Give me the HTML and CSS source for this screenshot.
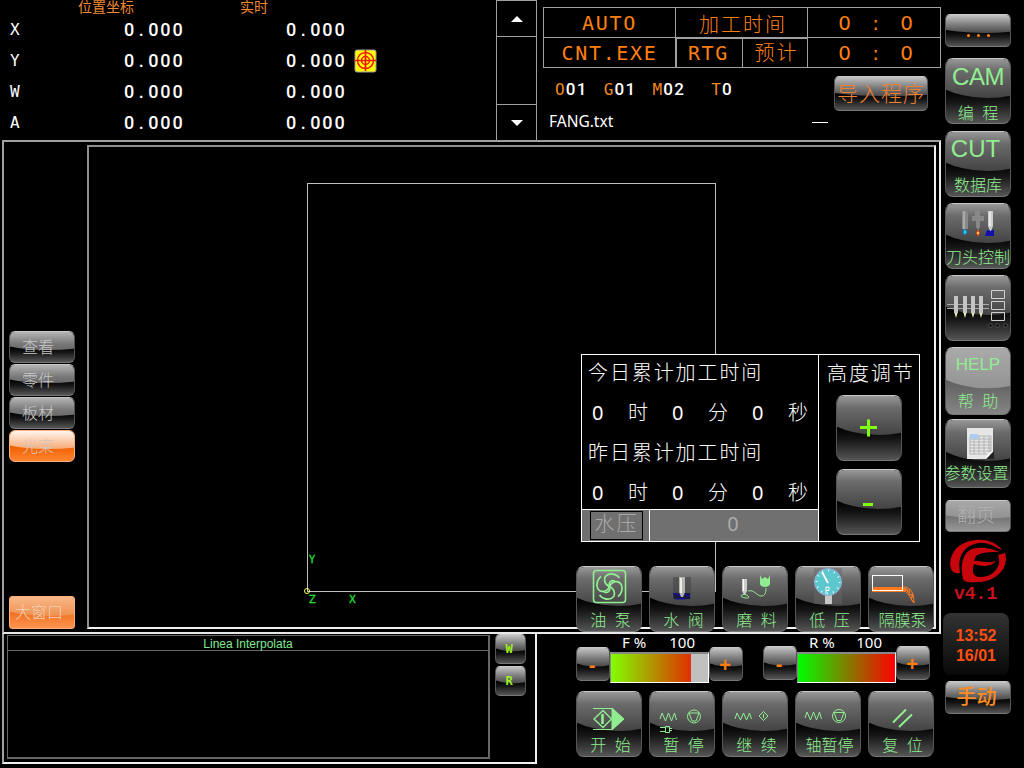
FILE: index.html
```html
<!DOCTYPE html>
<html lang="zh-CN">
<head>
<meta charset="utf-8">
<title>CNT</title>
<link rel="stylesheet" href="styles.css">
</head>
<body>
<div class="app">
  <div class="main">
    <header class="top">
      <section class="coords">
        <div class="row head"><span></span><span class="c1">位置坐标</span><span class="c2">实时</span></div>
        <div class="row"><b>X</b><span class="num">0<i>.</i>000</span><span class="num">0<i>.</i>000</span></div>
        <div class="row"><b>Y</b><span class="num">0<i>.</i>000</span><span class="num">0<i>.</i>000</span>
          <svg class="target" viewBox="0 0 23 24"><rect x="1" y="1" width="21" height="22" rx="2" fill="#ff0" stroke="#999"/><g fill="none" stroke="#f01808" stroke-width="1.5"><circle cx="11.5" cy="11.5" r="8"/><circle cx="11.5" cy="11.5" r="4"/><path d="M11.5 1v21M1 11.5h21" stroke-width="1.7"/></g></svg></div>
        <div class="row"><b>W</b><span class="num">0<i>.</i>000</span><span class="num">0<i>.</i>000</span></div>
        <div class="row"><b>A</b><span class="num">0<i>.</i>000</span><span class="num">0<i>.</i>000</span></div>
      </section>
      <div class="scroll">
        <div class="arrow"><svg viewBox="0 0 12 6"><path d="M0 6L6 0L12 6z"/></svg></div>
        <div class="track"></div>
        <div class="arrow"><svg viewBox="0 0 12 6"><path d="M0 0L6 6L12 0z"/></svg></div>
      </div>
      <section class="status">
        <div class="table">
          <div class="cell mono">AUTO</div><div class="cell cjk">加工时间</div><div class="cell clock"><span>0</span><span>:</span><span>0</span></div>
          <div class="cell mono">CNT.EXE</div><div class="cell pair"><span class="mono">RTG</span><span class="cjk">预计</span></div><div class="cell clock"><span>0</span><span>:</span><span>0</span></div>
        </div>
        <div class="program">
          <div class="codes"><span>O<em>01</em></span><span>G<em>01</em></span><span>M<em>02</em></span><span class="tool">T<em>0</em></span></div>
          <button class="btn small import">导入程序</button>
        </div>
        <div class="file"><span>FANG.txt</span><span class="dash"></span></div>
      </section>
    </header>

    <section class="work">
      <nav class="tabs">
        <button class="btn tab">查看</button>
        <button class="btn tab">零件</button>
        <button class="btn tab">板材</button>
        <button class="btn tab active">光束</button>
        <button class="btn window">大窗口</button>
      </nav>
      <div class="canvas">
        <svg class="plot" viewBox="0 0 845 480">
          <rect x="218.500" y="36.500" width="408" height="408" fill="none" stroke="#c0c0c0"/>
          <g fill="none" stroke="#ff5"><circle cx="218" cy="444" r="2.500"/></g>
          <g class="axis"><text x="220" y="416">Y</text><text x="220" y="456">Z</text><text x="260" y="456">X</text></g>
        </svg>
      </div>

      <aside class="times">
        <div class="totals">
          <h2>今日累计加工时间</h2>
          <p><b>0</b><span>时</span><b>0</b><span>分</span><b>0</b><span>秒</span></p>
          <h2>昨日累计加工时间</h2>
          <p><b>0</b><span>时</span><b>0</b><span>分</span><b>0</b><span>秒</span></p>
          <div class="pressure"><div><span>水压</span></div><b>0</b></div>
        </div>
        <div class="height">
          <h2>高度调节</h2>
          <button class="btn"><svg viewBox="0 0 66 66"><path d="M24 32.500h17M32.500 24.500v17" stroke="#80ff10" stroke-width="3"/></svg></button>
          <button class="btn"><svg viewBox="0 0 66 66"><path d="M27 35.500h10" stroke="#80ff10" stroke-width="3"/></svg></button>
        </div>
      </aside>

      <div class="actions devices">
        <button class="btn"><svg viewBox="0 0 66 66" class="line"><rect x="17.500" y="4.500" width="32" height="32" rx="3" stroke-width="1.600"/><g stroke-width="1.700"><path id="arm" d="M33.500 20.500C28 18 26.500 11 32 8.500C36 7 41 8.500 43.500 12M33.500 20.500C32.500 16 35 13.500 39 15"/><use href="#arm" transform="rotate(180 33.500 20.500)"/><path id="side-arm" d="M33.500 20.500C36 15 43 13.500 45.500 19C47 23 45.500 28 42 30.500"/><use href="#side-arm" transform="rotate(180 33.500 20.500)"/></g></svg><label>油 泵</label></button>
        <button class="btn"><svg viewBox="0 0 66 66"><rect x="24" y="11" width="18" height="23" fill="#444" opacity=".6"/><path d="M24 27h17v6H25z" fill="#181840"/><path d="M24 29l3-2 3 3 4-2 7 2M27 33h9" stroke="#11b" fill="none"/><path d="M30 11h6v15l-2 5h-2l-2-5z" fill="#b5b5ae"/><path d="M32 12v15" stroke="#fff" stroke-width="1.500"/></svg><label>水 阀</label></button>
        <button class="btn"><svg viewBox="0 0 66 66"><path d="M20 13h5v12l-2 4h-1l-2-4z" fill="#ccc"/><path d="M21.500 13v12" stroke="#fff"/><path d="M20 31c-3-2 3-4 6-1s-4 2-6 1zM26 25c6-2 9 5 13 5c4 0 5-3 5-8" stroke="#90ee90" fill="none"/><path d="M38 9l2 4 3-2 3 2 2-4v9c-1 4-9 4-10 0z" fill="#90ee90"/></svg><label>磨 料</label></button>
        <button class="btn"><svg viewBox="0 0 66 66"><rect x="19" y="2" width="28" height="36" fill="#666" opacity=".5"/><path d="M30 28h7v10h-7z" fill="#c8c8c8"/><circle cx="33" cy="16" r="13.500" fill="#5cc7cc" stroke="#9ad" /><circle cx="33" cy="16" r="11.500" fill="none" stroke="#e8ffff" stroke-width="2" stroke-dasharray="1 5"/><path d="M27 6l6 11" stroke="#fff" stroke-width="1.800"/><path d="M31 28v-7h3v3.500h-3" fill="none" stroke="#fff"/></svg><label>低 压</label></button>
        <button class="btn"><svg viewBox="0 0 66 66"><path d="M4 21h31l3 2v3H4z" fill="#ff7820"/><rect x="4.500" y="9.500" width="30" height="15" fill="none" stroke="#fff"/><path d="M35 21c8 0 11 6 11 16M35 24c5 2 6 6 11 13M37 21l3 5 2-3-1 6 4-1-2 5 3 4M40 23c-4 4 7 6 4 9" fill="none" stroke="#ff7820" stroke-width="1"/></svg><label>隔膜泵</label></button>
      </div>
    </section>

    <footer class="bottom">
      <section class="console">
        <div class="log"><div>Linea Interpolata</div></div>
        <div class="modes"><button class="btn small">W</button><button class="btn small">R</button></div>
      </section>
      <section class="controls">
        <div class="feeds">
          <div class="feed"><button class="btn small">-</button><div class="gauge"><p><span>F %</span><span>100</span></p><div class="bar f"></div></div><button class="btn small">+</button></div>
          <div class="feed r"><button class="btn small">-</button><div class="gauge"><p><span>R %</span><span>100</span></p><div class="bar"></div></div><button class="btn small">+</button></div>
        </div>
        <div class="actions">
          <button class="btn"><svg viewBox="0 0 66 66" class="line"><path d="M17 17.500h19M17 38.500h19" /><path d="M36 17l12 11-12 11z" fill="#90ee90"/><path d="M18 28l9-8.500 8.500 8.500-8.500 8.500z" stroke-width="1.400"/><path d="M26.500 23v10" stroke-width="2.600"/></svg><label>开 始</label></button>
          <button class="btn"><svg viewBox="0 0 66 66" class="line"><path d="M11 28l2-6 3.500 8 3-8 3 8 3-8 2 7"/><circle cx="45" cy="25.500" r="6.500"/><path d="M40 22h10l-3 8h-4z"/><path d="M11 36.500h5M11 40.500h5M16.500 35.500h4v6h-4zM21 37.500h2M21 39.500h2" /></svg><label>暂 停</label></button>
          <button class="btn"><svg viewBox="0 0 66 66" class="line"><path d="M13 28l2-6 3.500 7 3-7 3 7 3-7 2 6M37 25l4.500-4.500 4.500 4.500-4.500 4.500zM41.500 23v4"/></svg><label>继 续</label></button>
          <button class="btn"><svg viewBox="0 0 66 66" class="line"><path d="M10 27l2-6 3.500 8 3-8 3 8 3-8 2 7"/><circle cx="44" cy="25" r="6.500"/><path d="M39 21.500h10l-3 8h-4z"/></svg><label>轴暂停</label></button>
          <button class="btn"><svg viewBox="0 0 66 66" class="line"><path d="M25 31.500l13-13M31 36l13-12.500" stroke-width="2"/></svg><label>复 位</label></button>
        </div>
      </section>
    </footer>
  </div>

  <aside class="side">
    <button class="btn small more"><i></i><i></i><i></i></button>
    <button class="btn cam"><strong>CAM</strong><label>编 程</label></button>
    <button class="btn cut"><strong>CUT</strong><label>数据库</label></button>
    <button class="btn head"><svg viewBox="0 0 66 66"><path d="M17 8h6v18h-6z" fill="#888"/><path d="M19 8v18" stroke="#ccc"/><path d="M18.500 27h3v4h-3z" fill="#4cf" stroke="#08c"/><path d="M30 8h5v5h4v5h-4v6l-2 3-2-3v-6h-4v-5h3z" fill="#888"/><path d="M33 27l1.500 3-1.500 3-1.500-3z" fill="#ff5" stroke="#e31"/><path d="M42 27h7v6h-9z" fill="#11a"/><path d="M43 8h5v15l-2 5h-1l-2-5z" fill="#ccc"/><path d="M45 9v14" stroke="#fff"/></svg><label>刀头控制</label></button>
    <button class="btn multi"><svg viewBox="0 0 66 66"><path d="M2 29.500h42M2 33.500h42" stroke="#aaa"/><path d="M9 21h4v17H9zM18 21h4v17h-4zM26 21h4v17h-4zM34 21h4v17h-4z" fill="#c4c4c4"/><path d="M9.500 38h3l-1.500 5zM18.500 38h3l-1.500 5zM26.500 38h3l-1.500 5zM34.500 38h3l-1.500 5z" fill="#eeb"/><g fill="none" stroke="#d0d0d0"><path d="M46.500 15.500h13v8h-13zM46.500 26.500h13v8h-13zM46.500 37.500h13v8h-13z"/></g><path d="M44 49h3v3h-3zM51 49h3v3h-3zM59 49h3v3h-3z" fill="#000" stroke="#777" stroke-width=".5"/></svg></button>
    <button class="btn help"><strong>HELP</strong><label>帮 助</label></button>
    <button class="btn params"><svg viewBox="0 0 66 66"><path d="M22 9h26v26l-6 5H22z" fill="#e6e6e6"/><path d="M25 17h21v18H25zM25 20h21M25 23h21M25 26h21M25 29h21M25 32h21M29 17v18M34 17v18M39 17v18M44 17v18" fill="none" stroke="#aaa" stroke-width=".8"/><path d="M25 15h8v5h-8z" fill="#adcdf0"/><path d="M49 32l-8 8h8z" fill="#222"/><path d="M48 32l-5 2-2 6z" fill="#fff"/></svg><label>参数设置</label></button>
    <button class="btn small page">翻页</button>
    <svg class="logo" viewBox="0 0 57 44"><path d="M10 34C-1 37-3 21 5 11C16-2 42-3 52 11C46 9 43 5 34 4C19 3 6 13 10 34z"/><path d="M13 40C10 28 12 14 22 10C31 7 43 10 49 13C41 13 31 13 26 17L24 22C30 21 35 25 46 22C41 28 32 28 24 25C22 31 22 36 28 38C42 39 53 28 48 16L55 14C60 29 45 43 28 43C20 44 14 43 13 40z"/></svg>
    <div class="version">v4.1</div>
    <div class="date">13:52<br>16/01</div>
    <button class="btn small manual">手动</button>
  </aside>
</div>
</body>
</html>
```

FILE: styles.css
```css
* { box-sizing: border-box; }
body { margin: 0; background: #000; color: #fff; font-family: "Liberation Sans", "Noto Sans CJK SC", sans-serif; }
h2, p { margin: 0; font-weight: 300; }
i, em { font-style: normal; }
.app { display: flex; width: 1024px; height: 768px; overflow: hidden; }
.main { width: 943px; display: flex; flex-direction: column; }

/* Glossy buttons */
.btn { position: relative; isolation: isolate; display: block; flex: none; width: 66px; height: 66px; margin: 0; padding: 0; overflow: hidden;
  border: 1px solid #555; border-top-color: #c8c8c8; border-bottom-color: #777; border-radius: 8px; color: #90ee90;
  font: 300 16px/18px "Liberation Sans", "Noto Sans CJK SC", sans-serif; background: linear-gradient(#000 50%, #161616 68%, #555); }
.btn::before { content: ""; position: absolute; z-index: -1; inset: 0; clip-path: ellipse(105% 61% at 65% 0); background: linear-gradient(#989898, #6c6c6c 18%, #444 60%); }
.btn > svg { position: absolute; left: -1px; top: -1px; width: 66px; height: 66px; }
.btn label { position: absolute; left: -4px; right: -4px; bottom: 1px; text-align: center; white-space: pre; word-spacing: 4px; }
.btn strong { position: absolute; left: -1px; right: -1px; text-align: center; font-weight: 400; }
.line { fill: none; stroke: #90ee90; }
.btn.small { height: 33px; border-radius: 5px; }
.btn.small::before { clip-path: ellipse(110% 58% at 60% 0); background: linear-gradient(#c4c4c4, #808080 30%, #444 60%); }

/* Coordinates */
.top { height: 140px; display: flex; }
.coords { width: 496px; }
.row { height: 31px; display: grid; grid-template-columns: 113px 162px 69px 30px; padding-left: 10px; align-items: center; }
.row b { font: 400 16px "DejaVu Sans Mono", monospace; }
.row.head { height: 14px; line-height: 14px; align-items: start; font-size: 14px; font-weight: 400; color: #f08830; grid-template-columns: 68px 162px 60px; }
.num { font: 500 18px Roboto, sans-serif; letter-spacing: 1.9px; white-space: nowrap; padding-left: 1px; }
.num i { display: inline-block; width: 12px; text-align: center; }
.target { width: 23px; height: 24px; }
.scroll { width: 41px; display: flex; flex-direction: column; border: 1px solid #a0a0a0; border-bottom: 0; }
.arrow { height: 35px; display: grid; place-items: center; }
.arrow svg { width: 12px; height: 6px; fill: #fff; }
.track { flex: 1; border: solid #a0a0a0; border-width: 1px 0; }

/* Status */
.status { width: 400px; padding: 7px 0 0 6px; }
.table { display: grid; grid-template-columns: 132px 132px 133px; grid-template-rows: 30px 30px; border: solid #a0a0a0; border-width: 1px 0 0 1px; width: 398px; color: #ff7f10; }
.cell { border: solid #a0a0a0; border-width: 0 1px 1px 0; display: flex; align-items: center; justify-content: center; }
.mono { font: 400 20px/28px "DejaVu Sans Mono", monospace; letter-spacing: 1.7px; }
.cjk { font-size: 20px; font-weight: 300; letter-spacing: 2px; padding: 4px 0 0 3px; line-height: 26px; }
.pair { outline: 1px solid #a0a0a0; outline-offset: -1px; padding: 0; }
.pair > span { width: 66px; flex: none; text-align: center; height: 28px; }
.pair > .cjk { padding: 1px 0 0 3px; }
.pair > span + span { border-left: 1px solid #a0a0a0; }
.clock { font: 20px "DejaVu Sans", sans-serif; justify-content: flex-start; padding-left: 21px; gap: 0; }
.clock span { width: 31px; text-align: center; }
.program { height: 44px; display: flex; align-items: flex-start; padding-top: 8px; }
.codes { width: 291px; display: flex; gap: 16px; padding: 3px 0 0 12px; font: 16px/20px "DejaVu Sans Mono", monospace; letter-spacing: 1px; color: #f08820; }
.codes em { color: #fff; font: 500 17px Roboto, sans-serif; letter-spacing: 1.4px; }
.codes .tool { margin-left: 10px; }
.btn.import { width: 94px; height: 35px; color: #f08030; font-size: 21px; letter-spacing: 1px; white-space: nowrap; line-height: 31px; }
.file { display: flex; padding: 0 0 0 6px; font: 15.5px/18px "Noto Sans", sans-serif; }
.file span { width: 263px; }
.file .dash { width: 16px; height: 1px; background: #fff; margin-top: 10px; }

/* Work area */
.work { position: relative; height: 494px; width: 939px; margin-left: 2px; flex: none; border: 2px solid #e8e8e8; border-left-color: #a0a0a0; border-top-color: #a0a0a0; display: flex; }
.tabs { width: 83px; display: flex; flex-direction: column; padding: 189px 0 1px 5px; gap: 1px; }
.btn.tab { height: 32px; border-radius: 6px; color: #c8c8c8; padding-right: 8px; line-height: 27px; }
.tab::before { clip-path: ellipse(100% 60% at 60% 0); background: linear-gradient(#b4b4b4, #777 40%, #505050); }
.btn.tab.active { border-color: #f8b080; background: linear-gradient(#f06000 50%, #ff8430); color: #d8c4b8; }
.tab.active::before { background: linear-gradient(#fff4ec, #f8b080 55%, #f49050); }
.btn.window { height: 33px; margin: auto 0 2px 0; border: 1px solid #f8b080; border-radius: 3px; color: #f0d0b8; background: linear-gradient(#f07020 50%, #ff9450); line-height: 28px; padding-right: 6px; }
.window::before { background: linear-gradient(#f8b888, #f09050 60%); }
.canvas { width: 849px; height: 484px; margin-top: 3px; border: 2px solid #f0f0f0; border-left-color: #909090; border-top-color: #909090; }
.plot { display: block; width: 845px; height: 480px; }
.axis text { font: 10px "DejaVu Sans", sans-serif; fill: #20e030; stroke: #20e030; stroke-width: .3px; }

/* Overlay panel with accumulated times */
.times { position: absolute; left: 577px; top: 212px; width: 339px; height: 188px; border: 1px solid #fff; background: #000; display: flex; }
.times h2 { font-size: 20px; line-height: 36px; letter-spacing: 1.9px; white-space: nowrap; padding-left: 6px; height: 40px; }
.times p { display: grid; grid-template-columns: repeat(6, 40px); height: 40px; font-size: 20px; line-height: 36px; }
.times p b { font: 20px/36px "Noto Sans", sans-serif; padding-left: 10px; }
.times p span { padding-left: 6px; font-weight: 300; }
.totals { width: 237px; border-right: 1px solid #fff; overflow: hidden; }
.totals p:nth-of-type(2) { height: 34px; }
.pressure { height: 32px; display: flex; border-top: 1px solid #fff; background: #707070; color: #aaa; }
.pressure div { width: 68px; border-right: 1px solid #fff; padding: 1px 0 0 8px; }
.pressure div span { display: block; width: 53px; height: 29px; border: 1px solid #000; font-size: 20px; line-height: 25px; letter-spacing: 2px; text-align: center; font-weight: 300; }
.pressure b { flex: 1; text-align: center; font: 20px/28px "Noto Sans", sans-serif; padding-right: 2px; }
.height { flex: 1; padding-top: 1px; }
.height .btn { margin: 0 0 8px 17px; }
.times .height h2 { padding-left: 8px; height: 39px; }
.actions { display: flex; gap: 7px; }
.actions .btn label { left: -1px; }
.devices { position: absolute; left: 572px; top: 424px; }

/* Bottom */
.bottom { display: flex; height: 134px; }
.console { width: 535px; height: 130px; margin-left: 2px; border: 2px solid #f0f0f0; border-top: 0; border-left-color: #a0a0a0; display: flex; }
.log { width: 483px; height: 124px; margin: 1px 0 0 3px; border: 1px solid #666; border-right-width: 2px; border-bottom-width: 2px; }
.log div { height: 15px; border-bottom: 1px solid #666; font-size: 12px; line-height: 17px; text-align: center; color: #80e890; }
.modes { padding: 0 0 0 5px; display: flex; flex-direction: column; gap: 2px; }
.modes .btn.small { width: 31px; height: 30px; color: #a0f020; font: bold 12px/27px "DejaVu Sans Mono", monospace; padding-right: 3px; }
.controls { padding: 0 0 0 39px; }
.feeds { display: flex; gap: 20px; height: 57px; }
.feed { display: flex; align-items: flex-start; }
.feed .btn.small { width: 34px; height: 34px; margin-top: 13px; color: #ff7f10; font: bold 20px/34px "Liberation Sans", sans-serif; padding-right: 2px; }
.feed.r .btn.small { margin-top: 12px; }
.gauge { width: 99px; }
.gauge p { display: flex; justify-content: space-between; padding: 0 14px 0 12px; height: 18px; font: 400 15px/17px "Noto Sans", sans-serif; }
.bar { height: 31px; border: 1px solid #fff; border-top: 2px solid #888; border-left-color: #888; background: linear-gradient(90deg, #0f0, #f00); }
.bar.f { background: linear-gradient(90deg, #80ff00, #e03000 82%, #c0c0c0 82%); }

/* Right side */
.side { width: 80px; padding: 14px 0 0 2px; }
.btn.more { display: flex; justify-content: center; gap: 7px; padding-top: 19px; }
.more i { width: 3px; height: 3px; border-radius: 50%; background: #ff7f10; }
.side .cam { margin-top: 11px; }
.cam strong, .cut strong { top: 6px; font-size: 24px; line-height: 24px; }
.cam strong { letter-spacing: -.5px; }
.cut strong { top: 5px; padding-right: 5px; }
.cam label { bottom: 0; }
.side .cut { margin-top: 7px; }
.side .head, .side .multi { margin-top: 6px; }
.side .help { height: 68px; margin-top: 6px; background: linear-gradient(#606060 50%, #858585); }
.help::before { background: linear-gradient(#aaa, #858585); }
.help strong { top: 8px; font-size: 17px; line-height: 17px; }
.help label { bottom: 3px; }
.side .params { height: 69px; margin-top: 4px; }
.params label { bottom: 4px; left: -7px; }
.side .page { height: 32px; margin-top: 12px; background: linear-gradient(#707070 50%, #999); color: #b0b0b0; font-size: 19px; line-height: 26px; padding-right: 4px; }
.side .page::before { background: linear-gradient(#a8a8a8, #808080); }
.logo { display: block; width: 57px; height: 44px; margin: 7px 0 0 5px; fill: #c8050c; }
.version { height: 30px; padding-left: 9px; color: #c8101c; font: bold 18px/23px "Liberation Mono", monospace; }
.date { width: 66px; height: 62px; margin: 0 0 0 -2px; border-radius: 8px; padding-top: 13px; text-align: center; color: #ff5010; font: bold 16px/20px "Liberation Sans", sans-serif; background: linear-gradient(#333, #080808); }
.side .manual { margin-top: 6px; color: #ff8c20; font-size: 20px; font-weight: 500; line-height: 31px; padding-right: 3px; }
```
